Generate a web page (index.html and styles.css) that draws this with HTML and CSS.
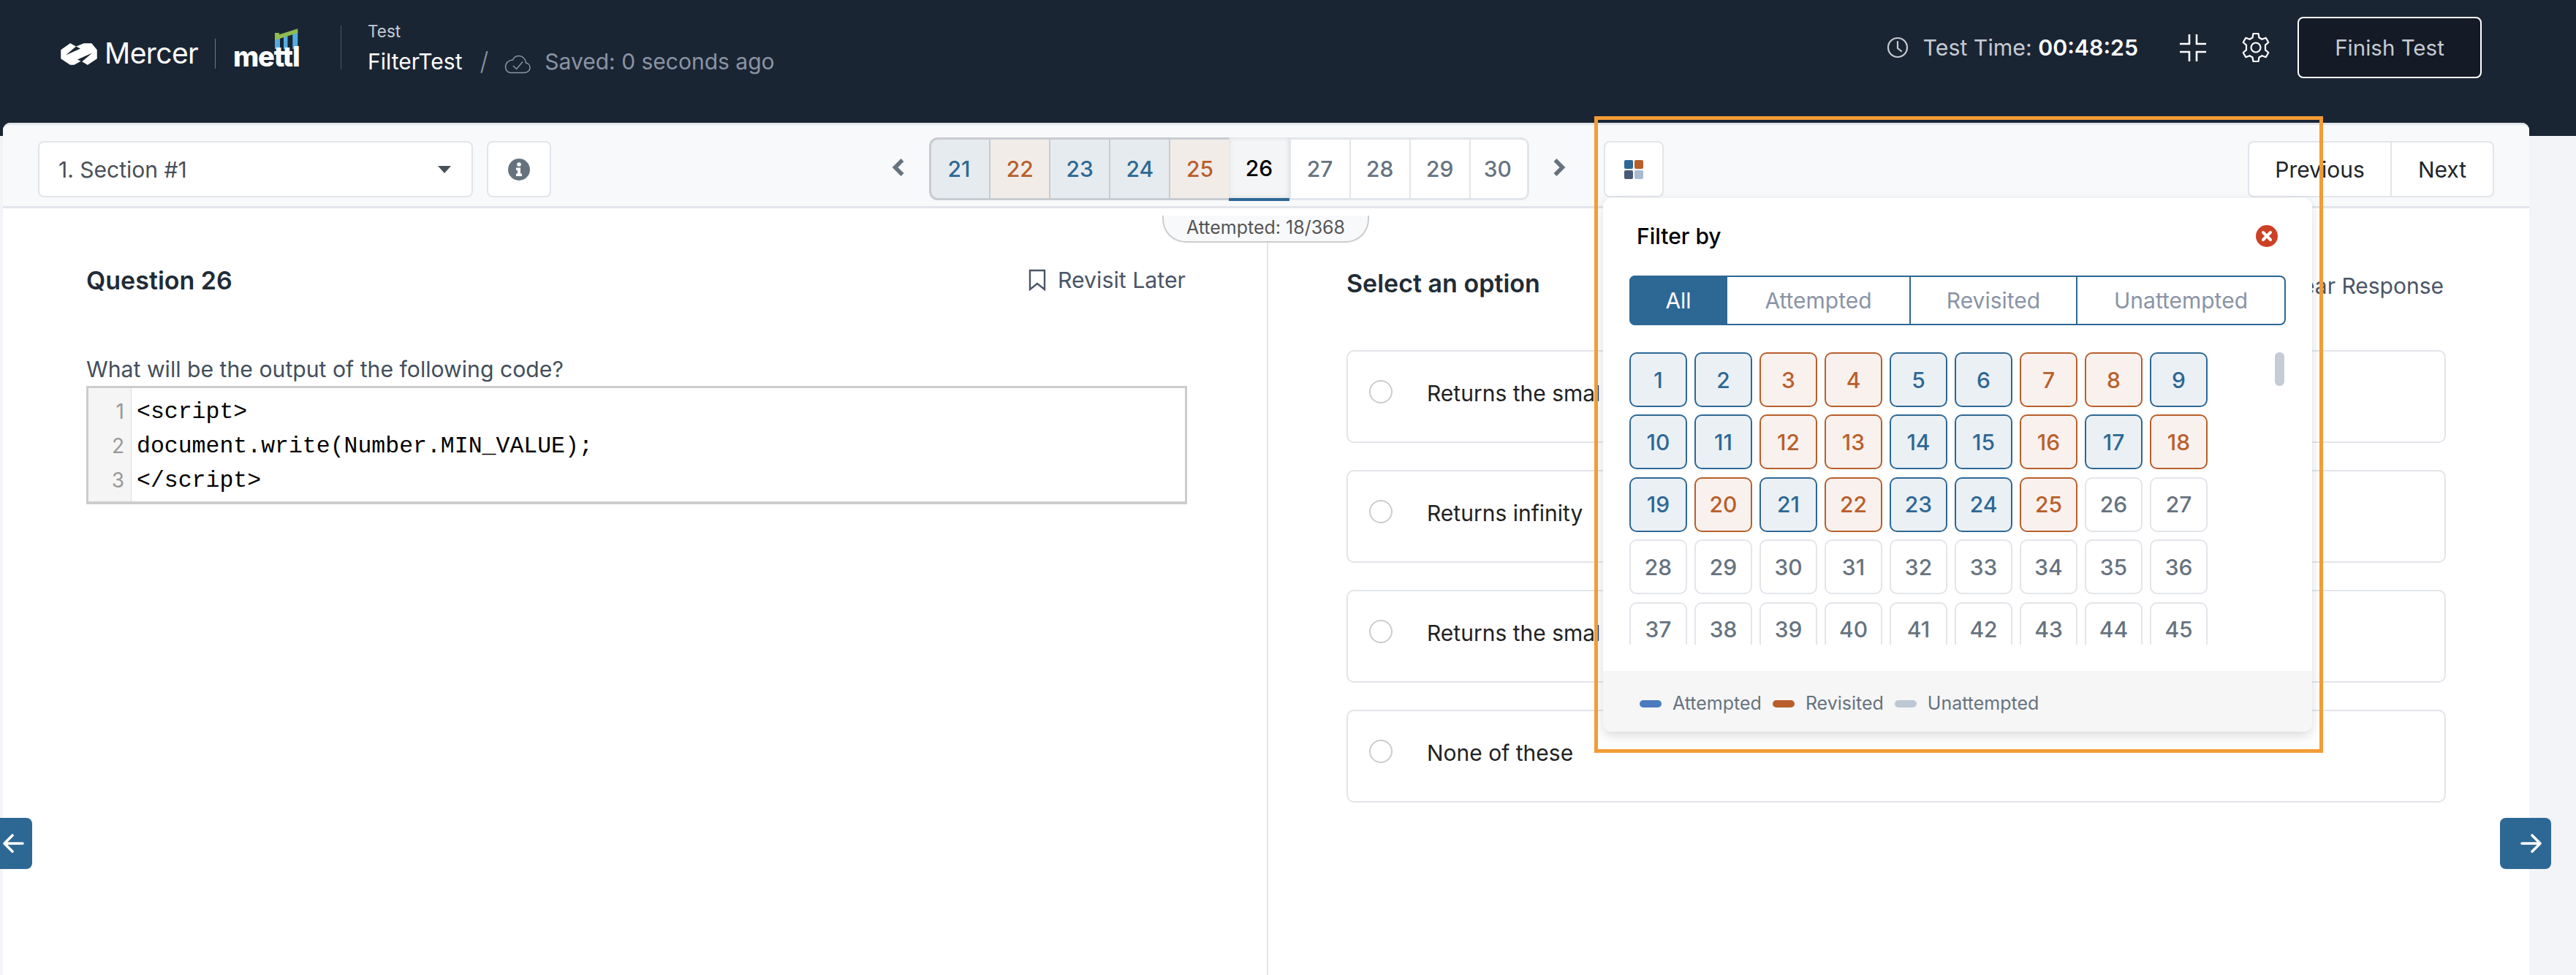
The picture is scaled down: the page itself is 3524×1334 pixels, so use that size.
FILE: index.html
```html
<!DOCTYPE html>
<html lang="en">
<head>
<meta charset="utf-8">
<title>FilterTest</title>
<link rel="stylesheet" href="styles.css">
</head>
<body>
<div class="page">
  <header class="topbar">
    <div class="brand">
      <svg class="mercer-mark" viewBox="0 0 50 30"><path fill="#fff" stroke="#fff" stroke-width="1.500" stroke-linejoin="round" d="M1 9.500 13 1 21 5.500 32 1H42L49 9.500V21L37 29 28 23.500 18 29H13L1 21Z"/><path fill="#1a2534" d="M7 16.500 21 4.500 27 7.500ZM43 13.500 29 25.500 23 22.500Z"/></svg>
      <span class="mercer-word">Mercer</span>
      <span class="brand-rule"></span>
      <span class="mettl">
        <svg class="mettl-mark" viewBox="0 0 34 28"><path fill="#54ace2" d="M0 12H7V28H0ZM12 9H17.500V28H12ZM24.300 4H31.300V28H24.300Z"/><path fill="#8fbb4f" d="M0 6H6V8.300L31.300 .3V6L0 16Z"/></svg>
        <span class="mettl-word">mettl</span>
      </span>
    </div>
    <span class="head-rule"></span>
    <div class="test-meta">
      <span class="test-kind">Test</span>
      <div class="test-line">
        <span class="test-name">FilterTest</span>
        <span class="test-slash">/</span>
        <svg class="cloud" viewBox="0 0 36 26" fill="none" stroke="#8a94a3" stroke-width="1.500"><path d="M9 24.500H27C31.500 24.500 35 21.500 35 17.500 35 14 32.500 11.500 29.500 11 29 5.500 25 1.500 20 1.500 16 1.500 13 3.500 11.500 7 6 7 1.500 11 1.500 16.500 1.500 21 4.500 24.500 9 24.500Z"/><path d="M12 15 16.500 19.500 25 9.500"/></svg>
        <span class="saved">Saved: 0 seconds ago</span>
      </div>
    </div>
    <div class="top-actions">
      <svg class="clock" viewBox="0 0 30 30" fill="none" stroke="#c6cad1" stroke-width="2.200"><circle cx="15" cy="15" r="13"/><path d="M15 7V16L20 20" stroke-linecap="round"/></svg>
      <span class="timer">Test Time: <strong>00:48:25</strong></span>
      <svg class="collapse" viewBox="0 0 36 37" fill="none" stroke="#fff" stroke-width="2.600"><path d="M13 0V13H0M23 0V13H36M13 37V24H0M23 37V24H36"/></svg>
      <svg class="gear" viewBox="0 0 40 42" fill="none" stroke="#fff" stroke-width="2.200" stroke-linejoin="round"><path d="M16.500 2H23.500L24.500 7.500 28.500 9.800 33.700 7.800 37.300 14 33 17.600V24.400L37.300 28 33.700 34.200 28.500 32.200 24.500 34.500 23.500 40H16.500L15.500 34.500 11.500 32.200 6.300 34.200 2.700 28 7 24.400V17.600L2.700 14 6.300 7.800 11.500 9.800 15.500 7.500Z"/><circle cx="20" cy="21" r="6.500"/></svg>
      <button class="finish">Finish Test</button>
    </div>
  </header>

  <div class="panel">
    <div class="toolbar">
      <div class="section-select"><span>1. Section #1</span><i class="caret"></i></div>
      <button class="info-btn">
        <svg class="info" viewBox="0 0 30 30"><circle cx="15" cy="15" r="15" fill="#66737f"/><circle cx="15" cy="8" r="2.800" fill="#fff"/><path fill="#fff" d="M11 12.500H17V20.500H19V24H11V20.500H13V16H11Z"/></svg>
      </button>
      <svg class="chev chev-left" viewBox="0 0 17 24"><path d="M14.500 2 4.500 12 14.500 22" fill="none" stroke="#66737f" stroke-width="5.500"/></svg>
      <div class="pager">
        <span class="pg pg-a">21</span><span class="pg pg-r">22</span><span class="pg pg-a">23</span><span class="pg pg-a">24</span><span class="pg pg-r">25</span><span class="pg pg-on">26</span><span class="pg">27</span><span class="pg">28</span><span class="pg">29</span><span class="pg">30</span>
      </div>
      <svg class="chev chev-right" viewBox="0 0 17 24"><path d="M2.500 2 12.500 12 2.500 22" fill="none" stroke="#66737f" stroke-width="5.500"/></svg>
      <button class="filter-btn"><span class="tiles"><i class="t1"></i><i class="t2"></i><i class="t3"></i><i class="t4"></i></span></button>
      <div class="prev-next"><button>Previous</button><button>Next</button></div>
    </div>

    <main class="split">
      <section class="col-q">
        <div class="q-head">
          <h2>Question 26</h2>
          <span class="revisit">
            <svg class="bookmark" viewBox="0 0 24 30" fill="none" stroke="#4a5568" stroke-width="2.400"><path d="M2 2H22V28L12 20 2 28Z"/></svg>
            Revisit Later
          </span>
        </div>
        <p class="prompt">What will be the output of the following code?</p>
        <div class="code">
          <div class="gutter"><span>1</span><span>2</span><span>3</span></div>
          <pre>&lt;script&gt;
document.write(Number.MIN_VALUE);
&lt;/script&gt;</pre>
        </div>
      </section>
      <section class="col-a">
        <div class="a-head">
          <h2>Select an option</h2>
          <span class="clear">Clear Response</span>
        </div>
        <div class="opt"><i class="radio"></i><span>Returns the smal</span></div>
        <div class="opt"><i class="radio"></i><span>Returns infinity</span></div>
        <div class="opt"><i class="radio"></i><span>Returns the smal</span></div>
        <div class="opt"><i class="radio"></i><span>None of these</span></div>
      </section>
      <div class="attempted">Attempted: 18/368</div>
    </main>
  </div>

  <button class="side side-prev"><svg viewBox="0 0 30 28" fill="none" stroke="#fff" stroke-width="3.600" stroke-linecap="round" stroke-linejoin="round"><path d="M28 14H4M14 3 3 14 14 25"/></svg></button>
  <button class="side side-next"><svg viewBox="0 0 30 28" fill="none" stroke="#fff" stroke-width="3.600" stroke-linecap="round" stroke-linejoin="round"><path d="M2 14H26M16 3 27 14 16 25"/></svg></button>

  <aside class="popover">
    <div class="pop-head">
      <span class="pop-title">Filter by</span>
      <svg class="pop-close" viewBox="0 0 30 30"><circle cx="15" cy="15" r="15" fill="#cc4125"/><path d="M10 10 20 20M20 10 10 20" stroke="#fff" stroke-width="4" stroke-linecap="round"/></svg>
    </div>
    <div class="tabs">
      <span class="tab tab-all">All</span><span class="tab tab-att">Attempted</span><span class="tab tab-rev">Revisited</span><span class="tab tab-un">Unattempted</span>
    </div>
    <div class="scroller">
      <div class="cells">
        <span class="c a">1</span><span class="c a">2</span><span class="c r">3</span><span class="c r">4</span><span class="c a">5</span><span class="c a">6</span><span class="c r">7</span><span class="c r">8</span><span class="c a">9</span>
        <span class="c a">10</span><span class="c a">11</span><span class="c r">12</span><span class="c r">13</span><span class="c a">14</span><span class="c a">15</span><span class="c r">16</span><span class="c a">17</span><span class="c r">18</span>
        <span class="c a">19</span><span class="c r">20</span><span class="c a">21</span><span class="c r">22</span><span class="c a">23</span><span class="c a">24</span><span class="c r">25</span><span class="c">26</span><span class="c">27</span>
        <span class="c">28</span><span class="c">29</span><span class="c">30</span><span class="c">31</span><span class="c">32</span><span class="c">33</span><span class="c">34</span><span class="c">35</span><span class="c">36</span>
        <span class="c">37</span><span class="c">38</span><span class="c">39</span><span class="c">40</span><span class="c">41</span><span class="c">42</span><span class="c">43</span><span class="c">44</span><span class="c">45</span>
      </div>
      <i class="thumb"></i>
    </div>
    <div class="legend">
      <i class="dot dot-a"></i><span>Attempted</span>
      <i class="dot dot-r"></i><span>Revisited</span>
      <i class="dot dot-u"></i><span>Unattempted</span>
    </div>
  </aside>

  <div class="highlight"></div>
</div>
</body>
</html>
```
FILE: styles.css
```css
* { box-sizing: border-box; }
html, body { margin: 0; padding: 0; }
body { font-family: Inter, "Liberation Sans", sans-serif; background: #f3f4f7; color: #212529; overflow: hidden; }
button { font: inherit; cursor: pointer; }
h2 { margin: 0; }
i { display: block; }

.page { position: relative; width: 3524px; height: 1334px; overflow: hidden; }

/* top bar */
.topbar { height: 186px; background: #1a2534; display: flex; align-items: center; padding: 23px 129px 79px 83px; }
.brand { display: flex; align-items: center; margin-top: 16px; height: 42px; }
.mercer-mark { width: 50px; height: 30px; margin-right: 10px; margin-top: 1px; }
.mercer-word { color: #fff; font-size: 39px; font-weight: 400; width: 127px; letter-spacing: -.6px; line-height: 42px; }
.brand-rule { width: 1px; height: 41px; background: #6d7581; margin: 0 24px; }
.mettl { position: relative; display: block; width: 92px; height: 42px; }
.mettl-word { position: absolute; left: 0; bottom: -2px; color: #fff; font-size: 38px; line-height: 38px; font-weight: 800; letter-spacing: -1.200px; }
.mettl-mark { position: absolute; left: 57px; top: -13px; width: 34px; height: 28px; }
.head-rule { width: 1px; height: 60px; background: #4c5562; margin: 0 36px 0 55px; }
.test-meta { display: flex; flex-direction: column; height: 62px; margin-top: -1px; }
.test-kind { color: #c6cad1; font-size: 22.500px; line-height: 18px; }
.test-line { display: flex; align-items: center; margin-top: 12px; height: 40px; }
.test-name { color: #fff; font-size: 30px; line-height: 40px; font-weight: 400; }
.test-slash { color: #8a94a3; font-size: 34px; margin: 0 22px 0 24px; font-weight: 300; }
.cloud { width: 36px; height: 26px; margin: 8px 19px 0 0; }
.saved { color: #8a94a3; font-size: 30px; }
.top-actions { margin-left: auto; display: flex; align-items: center; height: 84px; }
.clock { width: 30px; height: 30px; margin-right: 20px; }
.timer { color: #c6cad1; font-size: 30.300px; }
.timer strong { color: #fff; font-weight: 600; }
.collapse { width: 36px; height: 37px; margin-left: 57px; }
.gear { width: 40px; height: 42px; margin-left: 48px; }
.finish { width: 252px; height: 84px; margin-left: 37px; background: #141a26; border: 2px solid #fff; border-radius: 8px; color: #c6cad1; font-size: 29.500px; }

/* content panel */
.panel { margin: -18px 64px 0 4px; height: 1166px; background: #fff; border-radius: 10px 10px 0 0; display: flex; flex-direction: column; }
.toolbar { height: 117px; background: #f8f9fb; border-top: 3px solid #e2e5ea; border-bottom: 3px solid #e2e5ea; border-radius: 10px 10px 0 0; display: flex; align-items: flex-start; padding: 22px 48px 0; }
.section-select { width: 595px; height: 77px; background: #fff; border: 2px solid #e2e5ea; border-radius: 8px; display: flex; align-items: center; justify-content: space-between; padding: 0 28px 0 26px; color: #495057; font-size: 30px; }
.caret { width: 0; height: 0; border-left: 9px solid transparent; border-right: 9px solid transparent; border-top: 10px solid #4a5058; }
.info-btn { width: 88px; height: 77px; margin-left: 19px; background: #fff; border: 2px solid #e2e5ea; border-radius: 8px; padding: 0; display: flex; align-items: center; justify-content: center; }
.info { width: 30px; height: 30px; }
.chev { width: 17px; height: 24px; margin-top: 24px; }
.chev-left { margin-left: 466px; margin-right: 34px; }
.chev-right { margin-left: 33px; margin-right: 52px; }
.pager { display: flex; width: 821px; height: 86px; margin-top: -5px; background: #fff; border: solid #e2e5ea; border-width: 3px 0; border-radius: 12px; }
.pg { flex: 0 0 82.100px; display: flex; align-items: center; justify-content: center; font-size: 30px; font-weight: 500; color: #66737f; border-left: 2px solid #e2e5ea; margin: -3px 0; }
.pg:first-child { border-left: 3px solid #c8ccd2; border-radius: 12px 0 0 12px; padding-right: 3px; }
.pg:last-child { border-right: 3px solid #e2e5ea; border-radius: 0 12px 12px 0; padding-right: 3px; }
.pg-a { background: #e5ebef; color: #2d6895; border-top: 3px solid #c8ccd2; border-bottom: 3px solid #c8ccd2; border-left-color: #c8ccd2; }
.pg-r { background: #f2ece8; color: #b85f2b; border-top: 3px solid #c8ccd2; border-bottom: 3px solid #c8ccd2; border-left-color: #c8ccd2; }
.pg-on { background: #f4f5f7; color: #000; border-left: 0; box-shadow: inset 0 0 6px #d4d6da; border-bottom: 4px solid #2d6895; margin-bottom: -4px; }
.filter-btn { width: 82px; height: 77px; background: #fff; border: 2px solid #e2e5ea; border-radius: 8px; padding: 0; display: flex; align-items: center; justify-content: center; }
.tiles { display: grid; grid-template-columns: 12px 12px; grid-auto-rows: 12px; gap: 2px; }
.tiles i { border-radius: 2px; }
.t1 { background: #2d6895; }
.t2 { background: #b85f2b; }
.t3 { background: #465a75; }
.t4 { background: #a9bbd0; }
.prev-next { margin-left: auto; width: 337px; height: 77px; display: flex; background: #fff; border: 2px solid #e2e5ea; border-radius: 8px; }
.prev-next button { border: 0; background: none; padding: 0; font-size: 30px; color: #212529; }
.prev-next button:first-child { width: 195px; border-right: 2px solid #e2e5ea; }
.prev-next button:last-child { flex: 1; }

/* question + answers */
.split { flex: 1; display: grid; grid-template-columns: 1729px 1727px; position: relative; }
.col-q { padding: 68px 109px 0 114px; }
.col-a { padding: 25px 114px 0 107px; border-left: 2px solid #e2e5ea; margin-top: 47px; }
.q-head { display: flex; align-items: center; justify-content: space-between; height: 60px; }
.q-head h2, .a-head h2 { font-size: 34px; font-weight: 600; color: #212b36; }
.revisit { display: flex; align-items: center; gap: 16px; color: #4a5568; font-size: 30.300px; margin-right: 2px; }
.bookmark { width: 24px; height: 30px; }
.prompt { margin: 72px 0 3px; font-size: 30.200px; line-height: 40px; color: #444f5c; }
.code { display: flex; height: 162px; border: 3px solid #ccc; border-bottom-width: 4px; }
.gutter { width: 59px; background: #f5f5f5; border-right: 1px solid #ddd; color: #999; font: 28px/47px Inter, "Liberation Sans", sans-serif; padding: 9px 9px 0 0; display: flex; flex-direction: column; align-items: flex-end; }
.code pre { margin: 0; padding: 9px 0 0 7px; font: 31.500px/47px "Liberation Mono", monospace; color: #000; }
.a-head { display: flex; align-items: center; justify-content: space-between; height: 60px; margin-bottom: 62px; }
.clear { color: #4a5568; font-size: 30px; margin-top: 8px; margin-right: 3px; }
.opt { height: 127px; margin-bottom: 37px; border: 2px solid #e2e5ea; border-radius: 10px; padding: 37px 0 0 29px; display: flex; align-items: flex-start; font-size: 30px; line-height: 40px; color: #222; }
.radio { width: 32px; height: 32px; border: 2px solid #ccc; border-radius: 50%; margin: 2px 47px 0 0; background: #fff; }
.attempted { position: absolute; left: 1586px; top: 10px; width: 283px; height: 37px; background: #f8f9fb; border: 2px solid #ccc; border-top: 0; border-radius: 0 0 32px 32px; font-size: 25px; line-height: 33px; text-align: center; color: #555; }

/* side arrows */
.side { position: absolute; top: 1119px; height: 70px; background: #2d6895; border: 0; padding: 0; display: flex; align-items: center; }
.side svg { width: 30px; height: 28px; }
.side-prev { left: 0; width: 44px; border-radius: 0 8px 8px 0; padding-left: 3px; }
.side-next { left: 3420px; width: 70px; border-radius: 8px; padding-left: 28px; }

/* filter popover */
.popover { position: absolute; left: 2193px; top: 271px; width: 970px; height: 730px; background: #fff; border-radius: 12px; box-shadow: 0 6px 16px rgba(0, 0, 0, .14); display: flex; flex-direction: column; }
.pop-head { display: flex; align-items: center; justify-content: space-between; height: 104px; padding: 0 47px 0 46px; }
.pop-title { font-size: 30px; font-weight: 500; color: #000; }
.pop-close { width: 30px; height: 30px; }
.tabs { display: flex; margin: 2px 36px 0; width: 898px; height: 68px; border: 2px solid #2d6895; border-radius: 8px; color: #8a94a6; font-size: 30px; }
.tab { display: flex; align-items: center; justify-content: center; border-left: 2px solid #2d6895; }
.tab-all { width: 134px; margin: -2px 0 -2px -2px; background: #2d6895; color: #fff; border: 0; border-radius: 8px 0 0 8px; }
.tab-att { width: 249px; border-left: 0; }
.tab-rev { width: 228px; }
.tab-un { flex: 1; }
.scroller { position: relative; margin: 37px 38px 0 36px; height: 400px; overflow: hidden; }
.cells { display: grid; grid-template-columns: repeat(9, 79px); grid-auto-rows: 75px; column-gap: 10px; row-gap: 10.400px; }
.c { display: flex; align-items: center; justify-content: center; border: 2px solid #e2e5ea; border-radius: 10px; font-size: 30px; font-weight: 500; color: #66737f; background: #fff; }
.c.a { background: #ebf0f4; border-color: #2d6895; color: #2d6895; }
.c.r { background: #f9f1ee; border-color: #b85f2b; color: #b85f2b; }
.thumb { position: absolute; right: 0; top: 0; width: 13px; height: 46px; border-radius: 6px; background: #c5ccd4; }
.legend { margin-top: auto; height: 83px; background: #f6f6f7; border-radius: 0 0 12px 12px; display: flex; align-items: center; padding: 4px 0 0 50px; font-size: 25px; color: #66737f; }
.legend span { margin-right: 15px; }
.dot { width: 30px; height: 10px; border-radius: 5px; margin-right: 15px; margin-top: 3px; }
.dot-a { background: #4a7bbf; }
.dot-r { background: #b85f2b; }
.dot-u { background: #bcc8d4; }

/* annotation rectangle */
.highlight { position: absolute; left: 2181px; top: 159px; width: 997px; height: 871px; border: 5px solid #f39c36; pointer-events: none; }
```
